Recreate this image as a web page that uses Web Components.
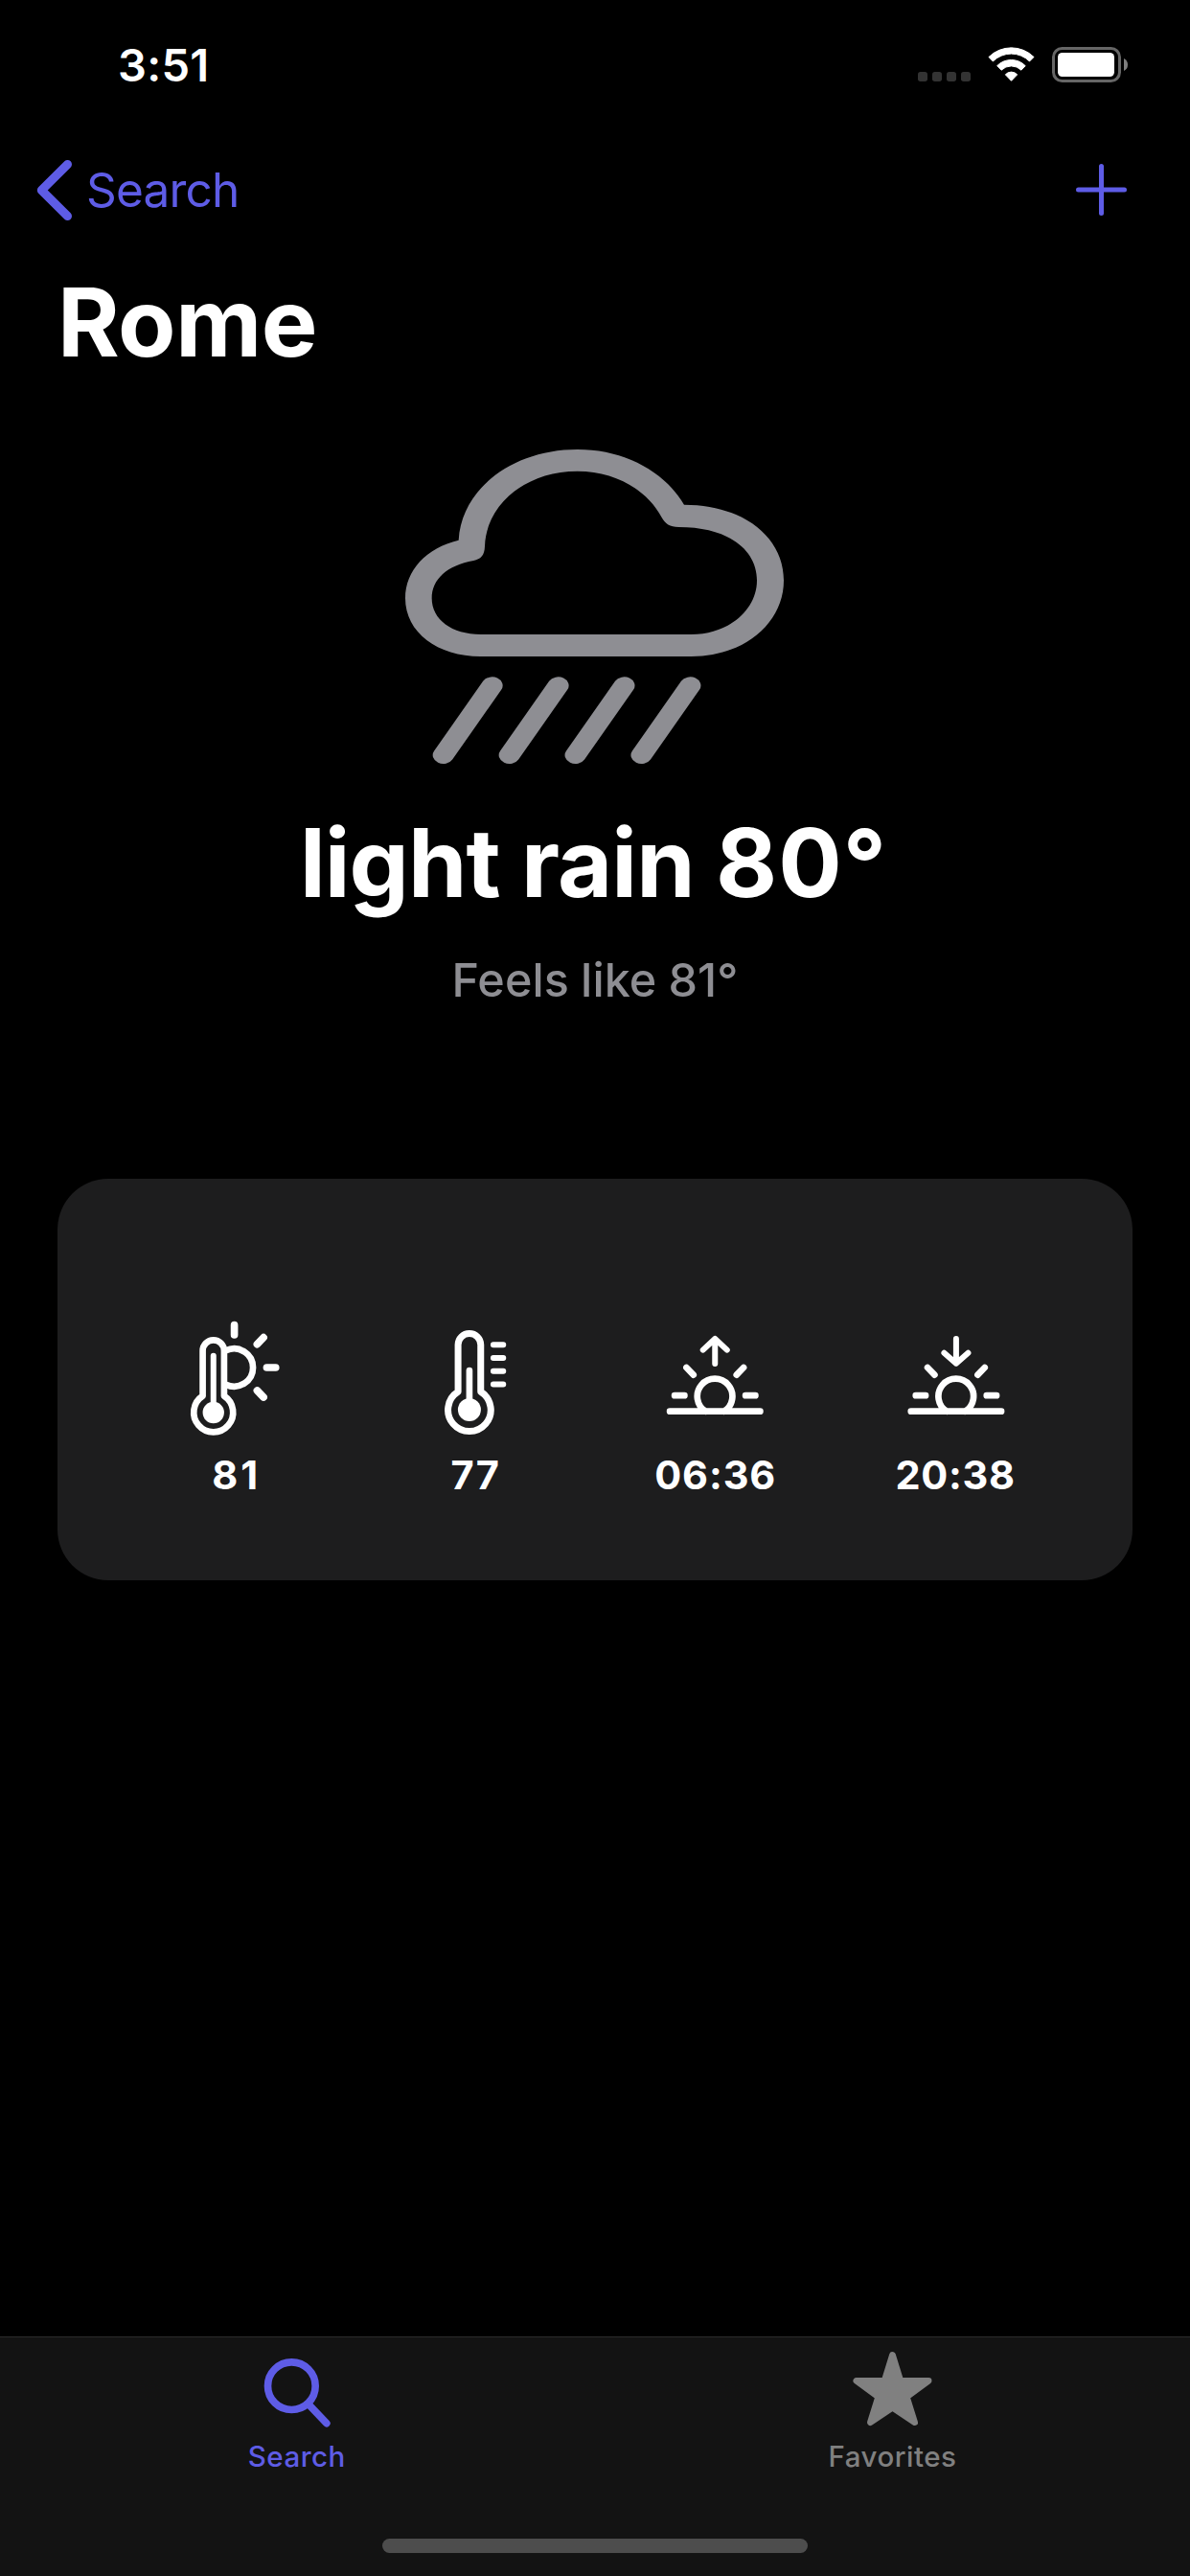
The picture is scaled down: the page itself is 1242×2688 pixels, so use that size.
<!DOCTYPE html>
<html lang="en">
<head>
<meta charset="utf-8">
<title>Weather</title>
<style>
html,body{margin:0;background:#000}
body{font-family:Inter,"Liberation Sans",sans-serif;color:#fff;width:1242px;height:2688px;overflow:hidden}
</style>
</head>
<body>
<weather-app></weather-app>
<script>
const define = (name, html) => {
  const tpl = document.createElement('template');
  tpl.innerHTML = html;
  customElements.define(name, class extends HTMLElement {
    constructor() {
      super();
      this.attachShadow({mode: 'open'}).append(tpl.content.cloneNode(true));
    }
  });
};

/* Status bar: clock, cellular dots, wifi, battery */
define('status-bar', `
<style>
:host{display:flex;align-items:center;justify-content:space-between;height:136px;padding:0 62px 0 123px;box-sizing:border-box}
time{font-size:47px;font-weight:600;line-height:60px;letter-spacing:.28px}
svg{display:block}
</style>
<time>3:51</time>
<svg width="225" height="56" viewBox="165 60 675 168">
  <g fill="#333"><rect x="174" y="165" width="30" height="30" rx="8"/><rect x="219" y="165" width="30" height="30" rx="8"/><rect x="264" y="165" width="30" height="30" rx="8"/><rect x="309" y="165" width="30" height="30" rx="8"/></g>
  <g fill="#fff" stroke="#fff" stroke-width="3" stroke-linejoin="round">
    <path d="M396 118.500A100.500 100.500 0 0 1 537 118.500L523.500 132A81 81 0 0 0 409 132Z"/>
    <path d="M422 146A62 62 0 0 1 510.500 146L497.500 159.500A44 44 0 0 0 435.500 159.500Z"/>
    <path d="M448 173.500A25 25 0 0 1 485 173.500L466.500 193Z"/>
  </g>
  <rect x="598.500" y="91.500" width="207" height="102" rx="27" fill="none" stroke="#666" stroke-width="9"/>
  <rect x="612" y="105" width="177" height="75" rx="14" fill="#fff"/>
  <path d="M819 123Q831 129 831 142.500Q831 156 819 162Z" fill="#808080"/>
</svg>`);

define('nav-bar', `
<style>
:host{display:flex;align-items:center;justify-content:space-between;height:124px;padding:0 60px 0 32px;box-sizing:border-box;color:#5e5ce6}
.back{display:flex;align-items:center;gap:10px;font-size:49.500px;line-height:60px;letter-spacing:-.8px}
svg{display:block;fill:none;stroke:#5e5ce6;stroke-linecap:round;stroke-linejoin:round}
</style>
<div class="back">
  <svg width="48" height="72" viewBox="32 162 48 72" stroke-width="9"><path d="M70.500 171.500L43.300 198.500L70.500 225.500"/></svg>
  <span><slot></slot></span>
</div>
<svg width="66" height="66" viewBox="1116 165 66 66" stroke-width="5"><path d="M1125.500 198H1173.500M1149.500 173.500V222.500"/></svg>`);

define('page-title', `
<style>
:host{display:block;height:152px;padding-left:60px}
h1{margin:0;font-size:98.600px;font-weight:700;line-height:152px;letter-spacing:-.43px}
</style>
<h1><slot></slot></h1>`);

define('weather-summary', `
<style>
:host{display:flex;flex-direction:column;align-items:center;padding-top:38px}
svg{display:block}
h2{margin:0;padding-right:3px;font-size:98.600px;font-weight:700;line-height:160px;letter-spacing:-.9px}
::slotted([slot=temperature]){letter-spacing:1px}
p{margin:0;font-size:48.500px;font-weight:450;line-height:86px;letter-spacing:.1px;word-spacing:-1px;color:#8e8e93}
</style>
<svg width="442" height="370" viewBox="0 0 1326 1110" fill="#8e8e93">
  <path fill-rule="evenodd" d="M236 341C245 180 405 57 608 57C755 57 880 125 942 230C1125 230 1254 330 1254 467C1254 600 1130 705 965 705H305C170 705 69 630 69 523C69 435 135 365 236 341Z
  M318 360C322 230 445 125 608 125C725 125 825 182 872 270C883 290 897 300 925 300C1080 300 1170 370 1170 467C1170 560 1080 636 965 636H305C215 636 152 590 152 523C152 463 200 420 283 405C305 400 317 390 318 360Z"/>
  <g transform="scale(1.22 1)" stroke="#8e8e93" stroke-width="54" stroke-linecap="round">
    <path d="M279.500 796L154.100 1014M449.100 796L323.700 1014M618.500 796L493.100 1014M788 796L662.600 1014"/>
  </g>
</svg>
<h2><slot name="condition"></slot> <slot name="temperature"></slot></h2>
<p><slot name="feels"></slot></p>`);

define('detail-card', `
<style>
:host{display:grid;grid-template-columns:repeat(4,1fr);margin:164px 60px 0;height:419px;padding:130px 60px 0;box-sizing:border-box;background:#1d1d1e;border-radius:53px}
</style>
<slot></slot>`);

const SUN = `<path stroke-width="20" d="M200.400 308A55 55 0 1 1 257.600 308M88 308H371M140 171L162 194M319 171L297 194M103 258.500H134M325 258.500H356"/>`;
const ICONS = {
  high: ['-14.25 0', `<path stroke-width="20" d="M125.500 290V148.500A33.500 33.500 0 0 1 192.500 148.500V290A61.500 61.500 0 1 1 125.500 290Z"/>
    <path stroke-width="18" d="M159 164V330"/><circle cx="159" cy="342" r="33.500" fill="#fff" stroke="none"/>
    <path stroke-width="20" stroke-linecap="butt" d="M198 148A59 59 0 1 1 198 254"/>
    <path stroke-width="23" d="M224.500 68V99M316 107L296 128M326 201H354M296 273L316 294"/>`],
  low: ['-42.750 0', `<path stroke-width="21" d="M143.500 277V130A35.500 35.500 0 0 1 214.500 130V277A67 67 0 1 1 143.500 277Z"/>
    <path stroke-width="20" d="M179 210V320"/><circle cx="179" cy="333" r="36" fill="#fff" stroke="none"/>
    <path stroke-width="18" d="M254 129.500H285M254 171H285M254 212H285M254 253.500H285"/>`],
  sunrise: ['-11.250 -30', SUN + `<path stroke-width="18" d="M229.500 84V159M192 116L229.500 81L267 116"/>`],
  sunset: ['-13.250 -30', SUN + `<path stroke-width="18" d="M229.500 81V156M192 125L229.500 158L267 125"/>`]
};

customElements.define('detail-item', class extends HTMLElement {
  connectedCallback() {
    const [origin, art] = ICONS[this.getAttribute('icon')];
    const ls = this.getAttribute('tracking') || '1';
    this.attachShadow({mode: 'open'}).innerHTML = `
<style>
:host{display:flex;flex-direction:column;align-items:center}
svg{display:block;fill:none;stroke:#fff;stroke-linecap:round;stroke-linejoin:round}
span{font-size:41.500px;font-weight:670;line-height:78px;letter-spacing:${ls}px;margin-right:-${ls}px}
</style>
<svg width="160" height="140" viewBox="${origin} 480 420">${art}</svg>
<span><slot></slot></span>`;
  }
});

define('tab-bar', `
<style>
:host{display:flex;flex-direction:column;align-items:center;justify-content:space-between;height:250px;box-sizing:border-box;padding-bottom:24px;background:#131313;box-shadow:inset 0 1px #2b2b2b}
nav{display:grid;grid-template-columns:1fr 1fr;width:100%}
.home{width:444px;height:15px;border-radius:8px;background:#4d4d4d}
</style>
<nav><slot></slot></nav>
<div class="home"></div>`);

const TAB_ICONS = {
  search: `<svg width="160" height="110" viewBox="1.500 24 480 330"><g fill="none" stroke="currentColor" stroke-width="23" stroke-linecap="round"><circle cx="221.500" cy="179" r="74.500"/><path d="M274 236L331 296"/></g></svg>`,
  star: `<svg width="160" height="110" viewBox="34.500 24 480 330"><path fill="currentColor" stroke="currentColor" stroke-width="20" stroke-linejoin="round" d="M273 82L298 163H386L317.600 213.500L342.500 293L273 246.500L203.500 293L228.400 213.500L160 163H248Z"/></svg>`
};
customElements.define('tab-item', class extends HTMLElement {
  connectedCallback() {
    this.attachShadow({mode: 'open'}).innerHTML = `
<style>
:host{display:flex;flex-direction:column;align-items:center;color:#808080}
:host([active]){color:#5e5ce6}
svg{display:block}
span{font-size:29.500px;font-weight:500;line-height:31px;letter-spacing:.5px}
:host([active]) span{margin-right:1.500px}
</style>
${TAB_ICONS[this.getAttribute('icon')]}
<span><slot></slot></span>`;
  }
});

define('weather-app', `
<style>
:host{display:flex;flex-direction:column;width:1242px;height:2688px;background:#000}
main{flex:1}
</style>
<status-bar></status-bar>
<nav-bar>Search</nav-bar>
<main>
  <page-title>Rome</page-title>
  <weather-summary><span slot="condition">light rain</span><span slot="temperature">80°</span><span slot="feels">Feels like 81°</span></weather-summary>
  <detail-card>
    <detail-item icon="high" tracking="3">81</detail-item>
    <detail-item icon="low" tracking="1.4">77</detail-item>
    <detail-item icon="sunrise" tracking=".9">06:36</detail-item>
    <detail-item icon="sunset" tracking=".7">20:38</detail-item>
  </detail-card>
</main>
<tab-bar>
  <tab-item icon="search" active>Search</tab-item>
  <tab-item icon="star">Favorites</tab-item>
</tab-bar>`);
</script>
</body>
</html>
